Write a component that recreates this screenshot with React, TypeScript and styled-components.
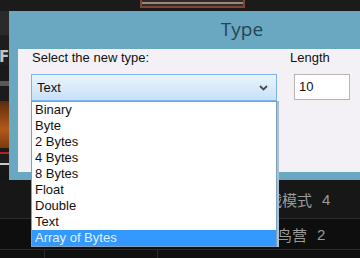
import React from 'react';
import styled, { createGlobalStyle } from 'styled-components';

const GlobalStyle = createGlobalStyle`
    html, body {
        margin: 0;
        padding: 0;
        background: #121212;
    }
`;

const Screen = styled.div`
    width: 360px;
    height: 258px;
    overflow: hidden;
    display: flex;
    flex-direction: column;
    background: #131313;
    font-family: "Liberation Sans", Arial, sans-serif;
`;

const TopStrip = styled.div`
    height: 11px;
    flex: none;
    display: flex;
    background: #1b1b1b;
    padding-left: 140px;
`;

const Plate = styled.div`
    width: 101px;
    height: 6px;
    border: 2px solid #7e4537;
    border-top: none;
    background: linear-gradient(#3a2622 0 2px, #8d8a88 2px 4px, #3a2622 4px);
`;

const Middle = styled.div`
    display: flex;
    height: 169px;
    flex: none;
`;

const SideStrip = styled.div`
    width: 9px;
    flex: none;
    display: flex;
    flex-direction: column;
    background: #161616;
    overflow: hidden;
`;

const Band = styled.div<{ $h: number; $bg: string }>`
    height: ${p => p.$h}px;
    flex: none;
    background: ${p => p.$bg};
`;

const SideGlyph = styled.div`
    height: 15px;
    flex: none;
    font: bold 15px/15px "DejaVu Sans", sans-serif;
    color: #c4c4c4;
    text-indent: -1px;
    background: #1e1e1e;
`;

const Dialog = styled.div`
    width: 448px;
    flex: none;
    background: #6aa8c1;
    padding: 0 9px 8px 9px;
    display: flex;
    flex-direction: column;
`;

const TitleBar = styled.div`
    height: 38px;
    display: flex;
    align-items: center;
    justify-content: center;
    font-family: "Open Sans", "Noto Sans", sans-serif;
    font-size: 19px;
    color: #274555;
    padding-bottom: 2px;
    box-sizing: border-box;
`;

const Client = styled.div`
    flex: 1;
    background: #f4f1f6;
    display: flex;
    align-items: flex-start;
    padding: 1px 0 0 13px;
`;

const Column = styled.div<{ $width?: number; $gap?: number }>`
    position: relative;
    display: flex;
    flex-direction: column;
    width: ${p => (p.$width ? `${p.$width}px` : 'auto')};
    margin-left: ${p => p.$gap || 0}px;
`;

const Label = styled.div`
    font-size: 13px;
    line-height: 15px;
    color: #111;
    padding-left: 1px;
    margin-bottom: 9px;
`;

const Combo = styled.div`
    height: 25px;
    border: 1px solid #7eb4ea;
    background: linear-gradient(#eaf4fd, #d9ebfb 50%, #c6e1f8);
    display: flex;
    align-items: center;
    justify-content: space-between;
    padding: 0 8px 0 5px;
    font-size: 13px;
    color: #111;
`;

const DropList = styled.ul`
    position: absolute;
    left: 0;
    top: 100%;
    width: 244px;
    margin: 0;
    padding: 0;
    list-style: none;
    background: #fff;
    border: 1px solid #7f9fbf;
    box-shadow: 2px 0 0 #a9bfd3;
    z-index: 2;
`;

const Item = styled.li<{ $selected?: boolean }>`
    height: 16px;
    line-height: 16px;
    font-size: 13px;
    padding-left: 3px;
    color: ${p => (p.$selected ? '#e4edff' : '#111')};
    background: ${p => (p.$selected ? '#3399ff' : 'transparent')};
`;

const LengthInput = styled.div`
    width: 50px;
    height: 24px;
    margin-left: 5px;
    border: 1px solid #b5b5b5;
    background: #fff;
    font-size: 13px;
    line-height: 24px;
    padding-left: 4px;
    color: #111;
`;

const Bottom = styled.div`
    flex: 1;
    display: flex;
    flex-direction: column;
`;

const Row = styled.div<{ $h: number; $bg: string; $indent: number }>`
    height: ${p => p.$h}px;
    flex: none;
    background: ${p => p.$bg};
    border-bottom: 1px solid #2c2c2c;
    display: flex;
    align-items: center;
    padding-left: ${p => p.$indent}px;
    font-family: "Noto Sans CJK SC", sans-serif;
    font-size: 15px;
    color: #9a9a9a;
`;

const Num = styled.span`
    margin-left: 10px;
    font-family: "Liberation Sans", sans-serif;
`;

const Footer = styled.div`
    flex: 1;
    display: grid;
    grid-template-columns: 45px 113px 1fr;
    background: #101010;
`;

const Cell = styled.div`
    border-right: 1px solid #2a2a2a;
`;

const Chevron = () => (
    <svg width="9" height="6" viewBox="0 0 9 6">
        <path d="M1 1 L4.5 4.5 L8 1" fill="none" stroke="#4a4a4a" strokeWidth="1.8" />
    </svg>
);

const types = ['Binary', 'Byte', '2 Bytes', '4 Bytes', '8 Bytes', 'Float', 'Double', 'Text', 'Array of Bytes'];

const App = () => {
    const selected = 'Array of Bytes';

    return (
        <Screen>
            <GlobalStyle />
            <TopStrip>
                <Plate />
            </TopStrip>
            <Middle>
                <SideStrip>
                    <Band $h={24} $bg="#2a2a2a" />
                    <Band $h={15} $bg="#1d1d1d" />
                    <SideGlyph>F</SideGlyph>
                    <Band $h={16} $bg="#1a1a1a" />
                    <Band $h={5} $bg="#585858" />
                    <Band $h={15} $bg="#1b1b1b" />
                    <Band $h={47} $bg="linear-gradient(#5a2c0c, #b35a18 60%, #7a3a10)" />
                    <Band $h={4} $bg="#1a1a1a" />
                    <Band $h={2} $bg="#b02424" />
                    <Band $h={9} $bg="#1c1c1c" />
                    <Band $h={2} $bg="#c8c8c8" />
                </SideStrip>
                <Dialog>
                    <TitleBar>Type</TitleBar>
                    <Client>
                        <Column $width={246}>
                            <Label>Select the new type:</Label>
                            <Combo>
                                <span>Text</span>
                                <Chevron />
                            </Combo>
                            <DropList>
                                {types.map(t => (
                                    <Item key={t} $selected={t === selected}>{t}</Item>
                                ))}
                            </DropList>
                        </Column>
                        <Column $gap={12}>
                            <Label>Length</Label>
                            <LengthInput>10</LengthInput>
                        </Column>
                    </Client>
                </Dialog>
            </Middle>
            <Bottom>
                <Row $h={38} $bg="#171717" $indent={252}>
                    挑战模式<Num>4</Num>
                </Row>
                <Row $h={30} $bg="#0e0e0e" $indent={262}>
                    菜鸟营<Num>2</Num>
                </Row>
                <Footer>
                    <Cell />
                    <Cell />
                    <div />
                </Footer>
            </Bottom>
        </Screen>
    );
};

export default App;
